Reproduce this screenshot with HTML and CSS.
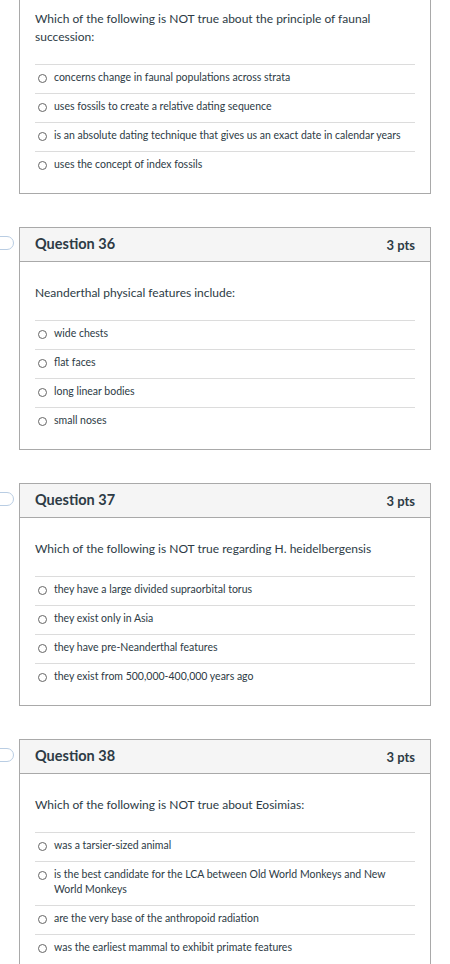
FILE: index.html
```html
<!DOCTYPE html>
<html lang="en">
<head>
<meta charset="utf-8">
<title>Quiz</title>
<link rel="stylesheet" href="styles.css">
</head>
<body>
<main class="quiz">
  <section class="card card-first">
    <div class="body">
      <p class="qtext">Which of the following is NOT true about the principle of faunal succession:</p>
      <ul class="answers">
        <li class="answer"><span class="radio"></span><span class="label">concerns change in faunal populations across strata</span></li>
        <li class="answer"><span class="radio"></span><span class="label">uses fossils to create a relative dating sequence</span></li>
        <li class="answer"><span class="radio"></span><span class="label">is an absolute dating technique that gives us an exact date in calendar years</span></li>
        <li class="answer"><span class="radio"></span><span class="label">uses the concept of index fossils</span></li>
      </ul>
    </div>
  </section>

  <section class="card">
    <span class="flag"></span>
    <header class="head"><h2 class="title">Question 36</h2><span class="pts">3 pts</span></header>
    <div class="body">
      <p class="qtext">Neanderthal physical features include:</p>
      <ul class="answers">
        <li class="answer"><span class="radio"></span><span class="label">wide chests</span></li>
        <li class="answer"><span class="radio"></span><span class="label">flat faces</span></li>
        <li class="answer"><span class="radio"></span><span class="label">long linear bodies</span></li>
        <li class="answer"><span class="radio"></span><span class="label">small noses</span></li>
      </ul>
    </div>
  </section>

  <section class="card">
    <span class="flag"></span>
    <header class="head"><h2 class="title">Question 37</h2><span class="pts">3 pts</span></header>
    <div class="body">
      <p class="qtext">Which of the following is NOT true regarding H. heidelbergensis</p>
      <ul class="answers">
        <li class="answer"><span class="radio"></span><span class="label">they have a large divided supraorbital torus</span></li>
        <li class="answer"><span class="radio"></span><span class="label">they exist only in Asia</span></li>
        <li class="answer"><span class="radio"></span><span class="label">they have pre-Neanderthal features</span></li>
        <li class="answer"><span class="radio"></span><span class="label">they exist from 500,000-400,000 years ago</span></li>
      </ul>
    </div>
  </section>

  <section class="card">
    <span class="flag"></span>
    <header class="head"><h2 class="title">Question 38</h2><span class="pts">3 pts</span></header>
    <div class="body">
      <p class="qtext">Which of the following is NOT true about Eosimias:</p>
      <ul class="answers">
        <li class="answer"><span class="radio"></span><span class="label">was a tarsier-sized animal</span></li>
        <li class="answer"><span class="radio"></span><span class="label">is the best candidate for the LCA between Old World Monkeys and New World Monkeys</span></li>
        <li class="answer"><span class="radio"></span><span class="label">are the very base of the anthropoid radiation</span></li>
        <li class="answer"><span class="radio"></span><span class="label">was the earliest mammal to exhibit primate features</span></li>
      </ul>
    </div>
  </section>
</main>
</body>
</html>
```

FILE: styles.css
```css
html, body {
  margin: 0;
  padding: 0;
  background: #ffffff;
}

body {
  font-family: Lato, "Liberation Sans", sans-serif;
  color: #2d3b45;
  overflow: hidden;
}

.quiz {
  display: flex;
  flex-direction: column;
  gap: 33px;
  padding: 0 19px;
  margin-top: -13px;
}

.card {
  position: relative;
  border: 1px solid #a9a9a9;
  background: #fff;
}

.flag {
  position: absolute;
  left: -32px;
  top: 8px;
  width: 24px;
  height: 12px;
  border: 1px solid #b9cde3;
  border-radius: 0 7px 7px 0;
  background: #fff;
}

.head {
  height: 33px;
  display: flex;
  align-items: center;
  justify-content: space-between;
  padding: 0 15px;
  background: #f5f5f5;
  border-bottom: 1px solid #a9a9a9;
}

.title {
  margin: 0;
  font-size: 14.5px;
  font-weight: 700;
  line-height: 1;
}

.pts {
  font-size: 13px;
  font-weight: 700;
  color: #2d3b45;
}

.body {
  padding: 22px 15px 13px;
}

.qtext {
  margin: 0 0 18px;
  font-size: 12px;
  line-height: 18px;
}

.answers {
  list-style: none;
  margin: 0;
  padding: 0;
}

.answer {
  display: flex;
  align-items: flex-start;
  gap: 7px;
  border-top: 1px solid #dcdcdc;
  padding: 5px 0 8px 3px;
  font-size: 10.5px;
  line-height: 15px;
}

.radio {
  flex: none;
  width: 7px;
  height: 7px;
  margin-top: 4px;
  border: 1px solid #666;
  border-radius: 50%;
}

.label {
  flex: 1;
  padding-right: 6px;
}
```
